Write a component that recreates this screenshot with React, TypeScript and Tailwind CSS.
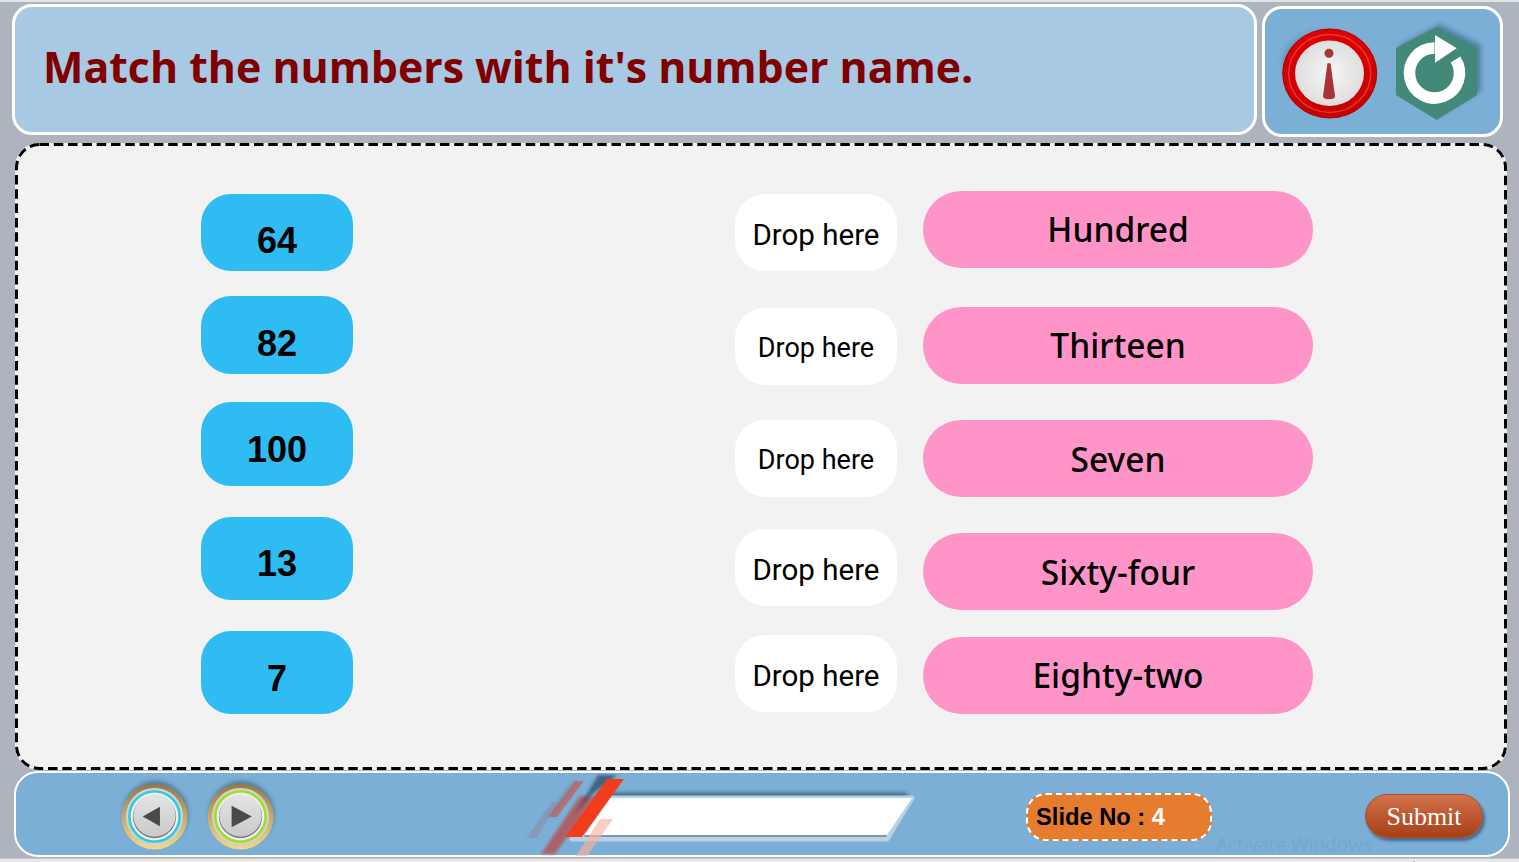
import React from 'react';

const numbers = [
    { label: '64', box: 'mt-[48px] h-[77px] pt-[17px]' },
    { label: '82', box: 'mt-[25px] h-[78px] pt-[18px]' },
    { label: '100', box: 'mt-[28px] h-[84px] pt-[12px]' },
    { label: '13', box: 'mt-[31px] h-[83px] pt-[11px]' },
    { label: '7', box: 'mt-[31px] h-[83px] pt-[13px]' },
];

const drops = [
    { box: 'mt-[48px] pt-[6px]', text: 'text-[29.5px]' },
    { box: 'mt-[37px] pt-[3px]', text: 'text-[27px]' },
    { box: 'mt-[35px] pt-[3px]', text: 'text-[27px]' },
    { box: 'mt-[32px] pt-[6px]', text: 'text-[29.5px]' },
    { box: 'mt-[29px] pt-[6px]', text: 'text-[29.5px]' },
];

const names = [
    { label: 'Hundred', box: 'mt-[45px]' },
    { label: 'Thirteen', box: 'mt-[39px]' },
    { label: 'Seven', box: 'mt-[36px] pt-[2px]' },
    { label: 'Sixty-four', box: 'mt-[36px] pt-[2px]' },
    { label: 'Eighty-two', box: 'mt-[27px]' },
];

const InfoIcon = () => (
    <svg width="96" height="97" viewBox="0 0 96 97" className="shrink-0 overflow-visible">
        <defs>
            <radialGradient id="infoFace" cx="50%" cy="50%" r="55%">
                <stop offset="0%" stopColor="#f6f6f6" />
                <stop offset="100%" stopColor="#dcdcdc" />
            </radialGradient>
            <linearGradient id="infoRing" x1="0" y1="0" x2="0" y2="1">
                <stop offset="0%" stopColor="#e00000" />
                <stop offset="100%" stopColor="#c80000" />
            </linearGradient>
            <filter id="infoBlur" x="-20%" y="-20%" width="140%" height="140%">
                <feGaussianBlur stdDeviation="3" />
            </filter>
        </defs>
        <ellipse cx="43" cy="38" rx="42" ry="30" fill="#3b5f80" opacity="0.35" filter="url(#infoBlur)" />
        <ellipse cx="47.7" cy="50.5" rx="47" ry="44.5" fill="url(#infoRing)" stroke="#a80000" strokeWidth="1" />
        <ellipse cx="47.7" cy="50.5" rx="41" ry="39" fill="none" stroke="#e95a5a" strokeWidth="1.5" opacity="0.6" />
        <ellipse cx="47.5" cy="50.3" rx="34.5" ry="32.7" fill="url(#infoFace)" />
        <circle cx="47" cy="30.3" r="4.5" fill="#ab3336" />
        <path d="M 45.5 40.3 L 48.5 40.3 L 53 73 Q 53 76.3 47 76.3 Q 41 76.3 41 73 Z" fill="#ab3336" />
    </svg>
);

const ReloadIcon = () => (
    <svg width="84" height="97" viewBox="0 0 84 97" className="shrink-0 overflow-visible">
        <defs>
            <filter id="hexBlur" x="-20%" y="-20%" width="140%" height="140%">
                <feGaussianBlur stdDeviation="2.5" />
            </filter>
        </defs>
        <polygon points="44,1 85,22 85,68 44,92 4,68 4,22" fill="#2f5a78" opacity="0.55" filter="url(#hexBlur)" />
        <polygon points="40.7,3.7 81,25 81,72 40.7,97 0,72 0,25" fill="#43897a" />
        <path d="M 59.5 36.5 A 25 25 0 1 1 38.5 25" fill="none" stroke="#ffffff" strokeWidth="11.5" />
        <polygon points="39,12 60.7,25.3 39,39.7" fill="#ffffff" />
    </svg>
);

const NavButton = ({ dir }: { dir: 'prev' | 'next' }) => (
    <svg width="67" height="67" viewBox="0 0 68 68" className="shrink-0 overflow-visible">
        <defs>
            <linearGradient id={`rim-${dir}`} x1="0" y1="0" x2="0" y2="1">
                <stop offset="0%" stopColor="#8d7b4f" />
                <stop offset="55%" stopColor="#c8b06e" />
                <stop offset="100%" stopColor="#f3d88a" />
            </linearGradient>
            <linearGradient id={`face-${dir}`} x1="0" y1="0" x2="0" y2="1">
                <stop offset="0%" stopColor="#e4e4e4" />
                <stop offset="100%" stopColor="#c9c9c9" />
            </linearGradient>
            <filter id={`navBlur-${dir}`} x="-20%" y="-20%" width="140%" height="140%">
                <feGaussianBlur stdDeviation="2" />
            </filter>
        </defs>
        <circle cx="35" cy="31" r="33" fill="#33506b" opacity="0.55" filter={`url(#navBlur-${dir})`} />
        <circle cx="34" cy="34" r="33.5" fill={`url(#rim-${dir})`} />
        <circle cx="34" cy="34" r="29" fill="#d2d2d2" />
        <circle cx="34" cy="34" r="25.5" fill="none" stroke={dir === 'prev' ? '#22cfe4' : '#9fe01c'} strokeWidth="2.5" />
        <circle cx="34" cy="34" r="24" fill="#f2f2f2" />
        <circle cx="34" cy="34" r="22" fill="#777777" />
        <circle cx="34" cy="33" r="21.5" fill={`url(#face-${dir})`} />
        {dir === 'prev' ? (
            <polygon points="22,34 39.5,24 39.5,44" fill="#4a4a4a" />
        ) : (
            <polygon points="25,23 45.5,34 25,45" fill="#4a4a4a" />
        )}
    </svg>
);

const TitleBar = () => (
    <svg width="400" height="82" viewBox="0 0 400 82" className="shrink-0 overflow-visible">
        <defs>
            <filter id="barBlur" x="-10%" y="-100%" width="120%" height="300%">
                <feGaussianBlur stdDeviation="2" />
            </filter>
            <filter id="stripeBlur" x="-30%" y="-30%" width="160%" height="160%">
                <feGaussianBlur stdDeviation="1.5" />
            </filter>
        </defs>
        <rect x="90" y="19" width="297" height="5" fill="#33516b" opacity="0.85" filter="url(#barBlur)" />
        <polygon points="90,24 392,24 367,65 52,65" fill="#b7d2e6" stroke="#b7d2e6" strokeWidth="5" strokeLinejoin="round" />
        <polygon points="65,61 367,61 366,63 64,63" fill="#5f7f99" opacity="0.7" />
        <polygon points="90,24 392,24 367,61 65,61" fill="#ffffff" />
        <polygon points="55,7 64,7 37,43 28,43" fill="#6d8aa3" opacity="0.5" filter="url(#stripeBlur)" transform="translate(-3,0)" />
        <polygon points="55,7 64,7 37,43 28,43" fill="#c0605f" opacity="0.75" />
        <polygon points="32,28 38,28 17,64 6,64" fill="#8a90a8" opacity="0.6" />
        <polygon points="60,22 75,22 35,80 21,80" fill="#b05a5c" opacity="0.9" filter="url(#stripeBlur)" />
        <polygon points="78,1 97,1 70,22 55,40" fill="#2f4c66" opacity="0.75" filter="url(#stripeBlur)" />
        <polygon points="87,5 104,5 62,63 45,63" fill="#f23d1d" />
        <polygon points="80,45 93,45 67,82 56,82" fill="#f9b49d" opacity="0.65" />
    </svg>
);

const App: React.FC = () => {
    return (
        <div className="relative w-[1519px] h-[862px] overflow-hidden bg-[#aeb4be]">
            <div className="h-[2px] bg-[#e4e4e4]" />
            <header className="flex items-start pl-[12px] pt-[2px] h-[135px]">
                <div className="w-[1245px] h-[131px] flex items-center pl-[28px] pb-[4px] bg-[#a8c9e3] border-[3px] border-white rounded-[20px]">
                    <h1 className="text-[42.85px] font-bold text-[#800000] font-['Open_Sans',sans-serif]">Match the numbers with it's number name.</h1>
                </div>
                <div className="ml-[5px] mt-[2px] w-[241px] h-[131px] flex items-center pl-[17px] gap-[18px] bg-[#7bafd6] border-[3px] border-white rounded-[20px]">
                    <InfoIcon />
                    <ReloadIcon />
                </div>
            </header>

            <main className="relative ml-[15px] mt-[6px] w-[1492px] h-[627px] flex pl-[186px] pt-[3px] bg-[#f2f2f2] rounded-[24px]">
                <div className="w-[152px] flex flex-col">
                    {numbers.map(n => (
                        <div key={n.label} className={`${n.box} w-full flex items-center justify-center bg-[#2fbcf2] rounded-[30px] text-[36px] font-bold text-black font-['Liberation_Sans',sans-serif]`}>
                            {n.label}
                        </div>
                    ))}
                </div>
                <div className="ml-[382px] w-[162px] flex flex-col">
                    {drops.map((d, i) => (
                        <div key={i} className={`${d.box} ${d.text} h-[77px] w-full flex items-center justify-center bg-white rounded-[30px] text-black font-['Roboto',sans-serif]`}>
                            Drop here
                        </div>
                    ))}
                </div>
                <div className="ml-[26px] w-[390px] flex flex-col">
                    {names.map(n => (
                        <div key={n.label} className={`${n.box} h-[77px] w-full flex items-center justify-center bg-[#ff94c8] rounded-[38px] text-[33.5px] font-medium text-black font-['Noto_Sans',sans-serif]`}>
                            {n.label}
                        </div>
                    ))}
                </div>
                <svg className="absolute inset-0 pointer-events-none" width="1492" height="627" viewBox="0 0 1492 627">
                    <rect x="1.5" y="1.5" width="1489" height="624" rx="23" fill="none" stroke="#000000" strokeWidth="3" strokeDasharray="9.5 4.8" />
                </svg>
            </main>

            <footer className="ml-[14px] mt-[1px] w-[1496px] h-[86px] flex items-center pl-[105px] bg-[#7bafd6] border-2 border-white rounded-[24px]">
                <div className="flex gap-[19px] mt-[5px]">
                    <NavButton dir="prev" />
                    <NavButton dir="next" />
                </div>
                <div className="ml-[246px] mt-[2px]">
                    <TitleBar />
                </div>
                <div className="ml-[106px] mt-[6px] w-[186px] h-[48px] flex items-center pl-[8px] pt-[1px] bg-[#e57c2e] border-2 border-dashed border-white rounded-[20px] text-[23.7px] font-bold text-black font-['Liberation_Sans',sans-serif]">
                    Slide No :&nbsp;<span className="text-white">4</span>
                </div>
                <button className="ml-[153px] mt-[4px] w-[118px] h-[44px] flex items-center justify-center rounded-[22px] border border-[#a8512c] bg-gradient-to-b from-[#d4734c] to-[#a63f14] shadow-[2px_3px_3px_rgba(40,60,90,0.6)] text-[26px] text-white font-['Liberation_Serif',serif]">
                    Submit
                </button>
            </footer>

            <div className="mt-[1px] h-[4px] bg-[#e8e8e8] border-t border-[#c4c4c4]" />

            <div className="absolute left-[1216px] top-[830px] text-[19px] text-[#6f97b8]/40 font-['Open_Sans',sans-serif]">Activate Windows</div>
            <div className="absolute left-[1216px] top-[856px] text-[14px] text-[#8f9aa5] font-['Open_Sans',sans-serif]">Go to Settings to activate Windows.</div>
        </div>
    );
};

export default App;
